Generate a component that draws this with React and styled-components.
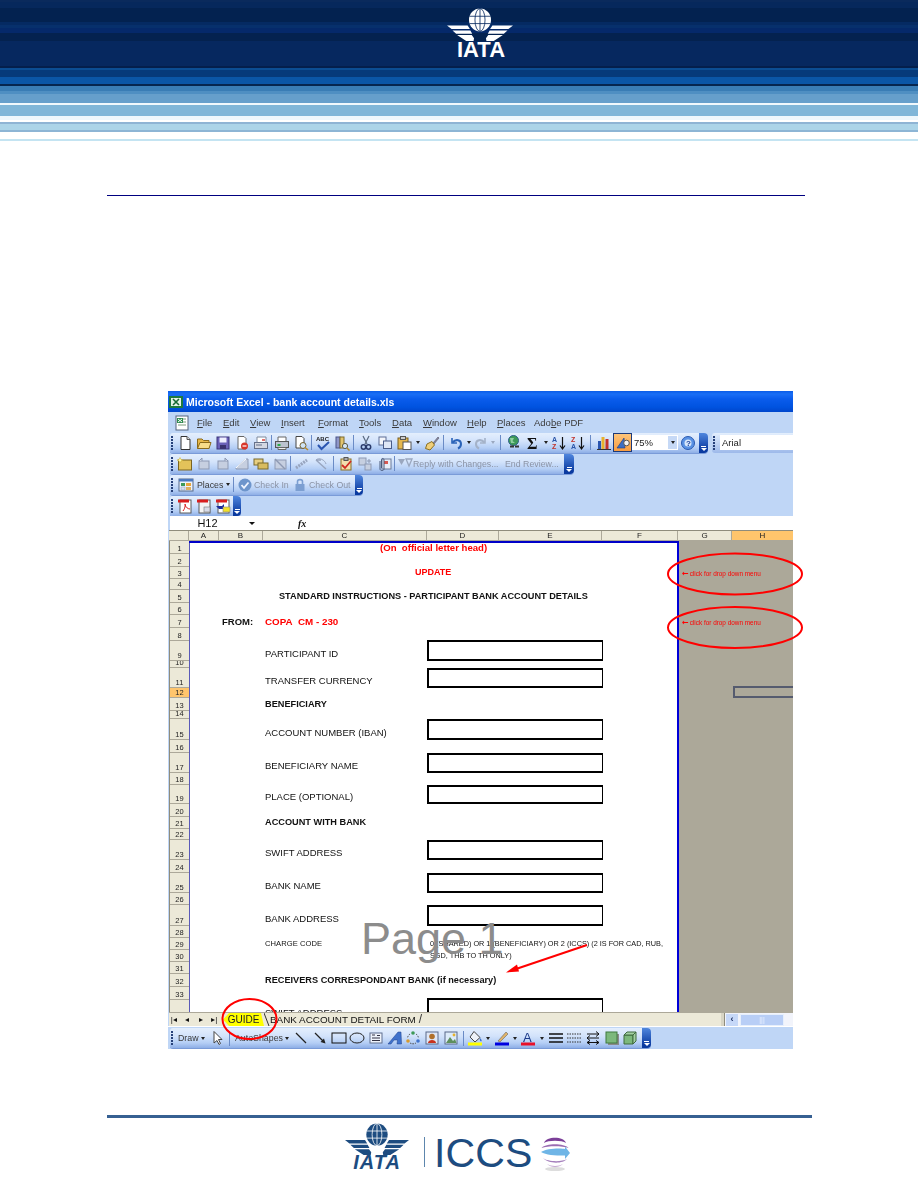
import React from 'react';
import styled, { createGlobalStyle } from 'styled-components';

const Global = createGlobalStyle`
  html, body { margin: 0; padding: 0; background: #fff; }
  body { font-family: "Liberation Sans", Arial, sans-serif; }
`;

const Page = styled.div`
  width: 918px; height: 1188px; overflow: hidden; position: relative;
  background: #fff; display: flex; flex-direction: column;
`;

/* ---------- page header ---------- */
const HeaderBand = styled.header`
  height: 141px; flex: none; display: flex; justify-content: center; padding-top: 8px; box-sizing: border-box;
  padding-left: 41px;
  background: linear-gradient(to bottom,
    #0a2a5c 0 2px, #06285c 2px 8px, #032250 8px 22px, #052a62 22px 25px, #07306c 25px 28px,
    #05296a 28px 33px, #04224f 33px 41px, #06285f 41px 66px, #041f4c 66px 68px, #0b4d92 68px 70px,
    #063a7a 70px 77px, #0b56a6 77px 84px, #06264f 84px 86px, #3a7db5 86px 91px, #4f8fc2 91px 94px,
    #669fcb 94px 103px, #f0f8fc 103px 105px, #80b6d8 105px 116px, #eef7fc 116px 120px, #fff 120px 122px,
    #8fb4d4 122px 123.5px, #acd4e8 123.5px 130px, #8db5d5 130px 131.5px, #fff 131.5px 139px, #c4e4f2 139px 141px);
`;
const LogoStack = styled.div`
  display: flex; flex-direction: column; align-items: center; width: ${p => p.$w}px; flex: none; color: ${p => p.$color};
`;
const LogoWord = styled.span`
  font-weight: 700; font-style: ${p => (p.$italic ? 'italic' : 'normal')};
  font-size: ${p => p.$size}px; line-height: ${p => p.$line}px; color: inherit;
  margin-top: ${p => p.$top}px; margin-left: ${p => p.$left}px; letter-spacing: ${p => p.$ls}px;
`;
const TopRule = styled.div`
  flex: none; height: 1px; width: 698px; margin: 54px 0 0 107px; background: #000080;
`;

/* ---------- excel frame ---------- */
const Frame = styled.section`
  position: relative; flex: none; width: 625px; height: 658px; margin: 195px 0 0 168px;
`;
const Shot = styled.div`
  width: 625px; height: 658px; overflow: hidden; display: flex; flex-direction: column;
  background: #bfd6f6; filter: blur(.4px);
`;
const TitleBar = styled.div`
  height: 21px; flex: none; display: flex; align-items: center; gap: 2px; padding-left: 0; box-sizing: border-box;
  background: linear-gradient(to bottom, #0a5ce8 0, #1a6ef5 3px, #0a5cec 8px, #0053e0 16px, #0046cc 21px);
  color: #fff; font-size: 10.5px; font-weight: 700;
`;
const MenuBar = styled.nav`
  height: 21px; flex: none; display: flex; align-items: center; padding-left: 2px; box-sizing: border-box;
  background: #bfd6f6; font-size: 9.5px; color: #3a3a3a;
`;
const MenuIcon = styled.span`width: 27px; flex: none; display: flex; padding-left: 4px; box-sizing: border-box;`;
const MenuItem = styled.span`width: ${p => p.$w}px; flex: none; white-space: nowrap;`;
const ToolRow = styled.div`
  height: ${p => p.$h || 21}px; flex: none; display: flex; align-items: flex-start; padding-left: 2px; background: #bfd6f6;
`;
const Toolbar = styled.div`
  height: 19.5px; flex: none; display: flex; align-items: center; border-radius: 3px 4px 4px 3px;
  background: linear-gradient(to bottom, #e4effd 0, #d3e3fb 40%, #b4cef5 75%, #8eaee6 100%);
  box-shadow: 0 1px 0 #7a9bd8; color: #8a94a8; font-size: 8.8px;
  width: ${p => p.$w}px;
`;
const GripBox = styled.span`
  flex: none; width: 5px; height: 14px; margin-left: 1px; margin-right: -1px;
  background: radial-gradient(circle at 1px 1px, #27417a 1px, transparent 1.2px) 0 0 / 2px 3px repeat-y;
`;
const Cell19 = styled.span`
  flex: none; width: ${p => p.$w || 19}px; height: 19px; display: flex; align-items: center; justify-content: center;
`;
const ActiveCell = styled(Cell19)`
  height: 19px; background: linear-gradient(#fdc77e, #f79a3e); box-shadow: inset 0 0 0 1px #1c3a7a;
`;
const Sep = styled.span`
  flex: none; width: ${p => p.$w}px; height: 15px; display: flex; justify-content: center;
  &::before { content: ""; width: 1px; background: #6a8bc6; }
`;
const Caret = styled.span`
  flex: none; width: ${p => p.$w}px; display: flex; justify-content: center; align-items: center;
  &::before {
    content: ""; border-left: 2.5px solid transparent; border-right: 2.5px solid transparent;
    border-top: 3px solid ${p => (p.$off ? '#9aa8c0' : '#222')};
  }
`;
const Chevron = styled.span`
  flex: none; margin-left: auto; width: ${p => p.$w || 9}px; height: 19.5px; border-radius: 0 4px 4px 0;
  background: linear-gradient(#4f86de, #0a3aa0 85%); display: flex; flex-direction: column; align-items: center;
  justify-content: flex-end; padding-bottom: 2px; box-sizing: border-box; gap: 1px;
  &::before { content: ""; width: 5px; height: 1px; background: #fff; }
  &::after { content: ""; border-left: 3px solid transparent; border-right: 3px solid transparent; border-top: 3px solid #fff; }
`;
const ToolText = styled.span`
  flex: none; white-space: nowrap; width: ${p => p.$w}px; color: ${p => (p.$on ? '#3a3a3a' : '#8b93a5')};
`;
const Combo = styled.span`
  flex: none; width: 46px; height: 15px; background: #fff; display: flex; align-items: center; justify-content: space-between;
  color: #222; font-size: 9.5px; padding-left: 2px; box-sizing: border-box;
`;
const ComboDrop = styled.span`
  width: 9px; height: 13px; margin-right: 1px; background: #c6d9f6; display: flex; align-items: center; justify-content: center;
  &::before { content: ""; border-left: 2.5px solid transparent; border-right: 2.5px solid transparent; border-top: 3px solid #222; }
`;
const FontField = styled.div`
  flex: none; margin-left: 4px; width: 90px; height: 19.5px; display: flex; align-items: center; gap: 3px;
  background: linear-gradient(#e4effd, #9db9ea); border-radius: 3px 0 0 3px;
`;
const FontInput = styled.span`
  flex: 1; height: 15px; background: #fff; font-size: 9.5px; color: #222; padding-left: 2px; line-height: 15px;
`;
const FormulaBar = styled.div`
  height: 14px; flex: none; display: flex; align-items: center; background: #fff; margin-left: 2px;
`;
const NameBox = styled.span`
  width: 75px; flex: none; text-align: center; font-size: 11px; line-height: 14px; color: #111;
`;
const NameDrop = styled.span`
  width: 14px; flex: none; display: flex; justify-content: center;
  &::before { content: ""; border-left: 3px solid transparent; border-right: 3px solid transparent; border-top: 3px solid #111; }
`;
const Fx = styled.span`
  margin-left: 39px; font-family: "Liberation Serif", serif; font-style: italic; font-weight: 700; font-size: 10px; color: #111;
`;

/* ---------- sheet ---------- */
const ColHeads = styled.div`
  height: 11px; flex: none; display: flex; background: #ece9d8; margin-left: 1px;
  border-top: 1px solid #8f8c7c; box-sizing: border-box;
`;
const ColHead = styled.span`
  flex: none; width: ${p => p.$w}px; box-sizing: border-box; text-align: center; font-size: 8px; line-height: 9px;
  color: #222; border-right: 1px solid #aca899; border-bottom: 1px solid #aca899;
  background: ${p => (p.$on ? '#ffc56c' : 'transparent')};
`;
const Sheet = styled.div`
  flex: none; height: 471px; overflow: hidden; display: flex; margin-left: 1px; background: #ece9d8;
`;
const RowHeads = styled.div`flex: none; width: 20px; display: flex; flex-direction: column; border-left: 1px solid #8f8c7c; box-sizing: border-box;`;
const RowHead = styled.span`
  flex: none; height: ${p => p.$h}px; box-sizing: border-box; overflow: hidden;
  display: flex; align-items: flex-end; justify-content: center; font-size: 7.5px; line-height: 9px; color: #222;
  border-bottom: 1px solid #aca899; background: ${p => (p.$on ? '#ffc56c' : '#ece9d8')};
`;
const PrintArea = styled.div`
  flex: none; width: 490px; display: grid; background: #fff; align-content: start;
  grid-template-columns: 30px 44px 164px 176px 76px;
  grid-template-rows: ${p => p.$rows};
  box-shadow: inset 0 2px 0 #0000c8, inset -2px 0 0 #0000d8, inset 1px 0 0 #5a5ab8;
`;
const Text = styled.span`
  grid-row: ${p => p.$row}; grid-column: ${p => p.$col} / span ${p => p.$span || 1};
  align-self: end; white-space: nowrap; line-height: 11px; padding-bottom: ${p => p.$pb ?? 1}px;
  margin-left: ${p => p.$ml ?? 2}px; font-size: ${p => p.$size || 9.5}px; font-weight: ${p => (p.$bold ? 700 : 400)};
  letter-spacing: ${p => p.$ls || 0}px; color: ${p => (p.$red ? '#ff0000' : '#111')};
`;
const InputBox = styled.span`
  grid-row: ${p => p.$row}; grid-column: 4; box-sizing: border-box; margin-top: ${p => p.$mt || 0}px;
  border: 2px solid #000; border-right-width: 1.5px; background: #fff;
`;
const GreyPane = styled.div`
  flex: 1; background: #aca899; display: grid; align-content: start;
  grid-template-columns: 54px 60px; grid-template-rows: ${p => p.$rows};
`;
const Note = styled.span`
  grid-row: ${p => p.$row}; grid-column: 1 / span 2; align-self: end; margin-left: 3px; white-space: nowrap;
  color: #f00; font-size: 6.4px; line-height: 9px; padding-bottom: 1px;
`;
const NoteArrow = styled.b`font-size: 8px; font-family: "DejaVu Sans", sans-serif; margin-right: 1px;`;
const Selection = styled.span`
  grid-row: 12; grid-column: 2; margin-top: -2px; border: 2px solid #555b6e; border-right: 0; box-sizing: border-box;
`;

/* ---------- tabs & draw bar ---------- */
const TabBar = styled.div`
  flex: none; height: 14px; display: flex; align-items: center; background: #ece9d8; margin-left: 1px;
  border-top: 1px solid #aca899; box-sizing: border-box; overflow: hidden;
`;
const NavArrows = styled.span`flex: none; width: 54px; display: flex; margin-left: -2px; margin-right: 2px;`;
const NavBtn = styled.span`flex: none; width: 13.5px; font-size: 8px; text-align: center; color: #111; line-height: 12px;`;
const GuideTab = styled.span`
  flex: none; width: 41px; height: 13px; text-align: center; font-size: 10px; line-height: 13px; color: #222;
  background: #ffff00; clip-path: polygon(0 50%, 6px 0, calc(100% - 3px) 0, 100% 100%, 6px 100%);
`;
const TabEdge = styled.svg`flex: none; width: 6px; height: 13px;`;
const PlainTab = styled.span`
  flex: none; font-size: 9.9px; line-height: 13px; color: #111; white-space: nowrap;
`;
const TabSlash = styled.span`flex: none; font-size: 12px; line-height: 13px; color: #333; margin-left: 3px;`;
const ScrollBar = styled.div`
  margin-left: auto; flex: none; width: 72px; height: 13px; display: flex; align-items: center; background: #f2f4fb;
`;
const ScrollGrip = styled.span`width: 3px; height: 13px; background: #d8d5c5; border-right: 1px solid #8f8c7c; flex: none; margin-right: 1px;`;
const ScrollBtn = styled.span`
  width: 12px; height: 12px; flex: none; background: #c6d8f8; color: #16295c; font-size: 9px; font-weight: 700; line-height: 11px; text-align: center;
  margin-right: 2px;
`;
const ScrollThumb = styled.span`
  width: 44px; height: 12px; flex: none; border: 1px solid #e6effc; box-sizing: border-box; background: #b8cef6;
  color: #eef4ff; font-size: 7px; line-height: 9px; text-align: center;
`;
const DrawGap = styled.div`height: 1px; flex: none; background: #fff;`;
const DrawRow = styled.div`
  height: 22px; flex: none; display: flex; align-items: center; padding-left: 2px; background: #bfd6f6;
`;

/* ---------- annotation overlay ---------- */
const Annotations = styled.svg`
  position: absolute; left: 0; top: 0; width: 640px; height: 658px; pointer-events: none; overflow: visible;
`;
const Watermark = styled.span`
  position: absolute; left: 193px; top: 522px; font-size: 45px; line-height: 52px; color: #8c8c8c; white-space: nowrap;
`;

/* ---------- footer ---------- */
const BottomRule = styled.div`
  flex: none; height: 3px; width: 705px; margin: 66px 0 0 107px; background: #366092;
`;
const FooterLogos = styled.footer`
  flex: none; display: flex; align-items: flex-start; margin: 5px 0 0 343px;
`;
const Divider = styled.span`flex: none; width: 1px; height: 30px; margin: 14px 9px 0 13px; background: #5d86ad;`;
const Iccs = styled.span`
  flex: none; font-size: 41px; line-height: 40px; margin-top: 10px; color: #1d4c80; letter-spacing: .1px;
`;
const Sphere = styled.span`flex: none; margin: 11px 0 0 8px; display: flex;`;

/* ---------- drawings ---------- */
const Emblem = ({ w, h, color, bg }) => (
  <svg width={w} height={h} viewBox="0 0 72 36" fill={color}>
    <ellipse cx="36" cy="13" rx="12" ry="12.5" />
    <g fill="none" stroke={bg} strokeWidth=".9">
      <ellipse cx="36" cy="13" rx="5.5" ry="12.5" />
      <path d="M36 .5V25.5M24.5 9H47.5M24.5 17H47.5" />
    </g>
    <path d="M0 19H22.5L25 23H5ZM6 24.5H25.5L27.5 28H10ZM11 29.5H27L29.5 33 29 36H21Z" />
    <path d="M72 19H49.5L47 23H67ZM66 24.5H46.5L44.5 28H62ZM61 29.5H45L42.5 33 43 36H51Z" />
  </svg>
);

const Globe3D = () => (
  <svg width="30" height="38" viewBox="0 0 30 38">
    <ellipse cx="15" cy="35" rx="10" ry="2" fill="#ddd" />
    <path d="M4 9C6 2 24 2 26 9C22 6 8 6 4 9Z" fill="#7b3f98" />
    <path d="M1.5 14C6 9 24 9 28.5 14C22 11.5 8 11.5 1.5 14Z" fill="#9a6db2" />
    <path d="M1 18C6 14 22 14 25 15V12.5L30 19 25 25V21.5C14 21.5 6 21 1 18Z" fill="#6fb5e6" />
    <path d="M3 24C8 28 22 28 27 25 23 30 8 30 3 24Z" fill="#a47fbc" />
    <path d="M7 30C11 32.5 19 32.5 23 30 19 34 11 34 7 30Z" fill="#c4a9d2" />
  </svg>
);

const S = ({ children }) => <svg width="16" height="16" viewBox="0 0 16 16">{children}</svg>;
const grey = { fill: '#c6cfe0', stroke: '#8d99b3' };
const icons = {
  xl: <><rect x="1" y="2" width="14" height="12" fill="#1f7a3e" /><rect x="3" y="4" width="10" height="8" fill="#e7f3e7" /><path d="M5 5L11 11M11 5L5 11" stroke="#1a6a34" strokeWidth="1.6" /></>,
  doc: <><rect x="2" y="1" width="12" height="14" fill="#fff" stroke="#56657e" /><path d="M4 4H12M4 7H12M4 10H12" stroke="#7c9c7c" /><rect x="3" y="3" width="6" height="5" fill="#2e8b4e" /><path d="M4 4L8 7M8 4L4 7" stroke="#fff" /></>,
  new: <><path d="M4 1.5H10L13 4.5V14.5H4Z" fill="#fff" stroke="#333" /><path d="M10 1.5V4.5H13" fill="#ddd" stroke="#555" /></>,
  open: <><path d="M1.5 4H6L7.5 5.5H13V13.5H1.5Z" fill="#e8b84a" stroke="#8a6a1c" /><path d="M1.5 13.5L4 7.5H15L13 13.5Z" fill="#f7dc8a" stroke="#8a6a1c" /></>,
  save: <><rect x="2" y="2" width="12" height="12" fill="#6a60b8" stroke="#3a3478" /><rect x="4.5" y="2.5" width="7" height="5" fill="#eef" /><rect x="5" y="10" width="6" height="4" fill="#39316f" /></>,
  perm: <><path d="M4 1.5H10L12 3.5V14H4Z" fill="#fff" stroke="#666" /><circle cx="10.5" cy="11" r="3.5" fill="#d8362a" /><rect x="8.5" y="10.4" width="4" height="1.2" fill="#fff" /></>,
  mail: <><path d="M4 2H13V8H4Z" fill="#fff" stroke="#7f8a9c" /><rect x="1.5" y="7.5" width="13" height="6" fill="#d4d8e2" stroke="#66718a" /><rect x="9" y="4" width="3" height="2" fill="#e2716c" /><path d="M3 10H9" stroke="#66718a" /></>,
  print: <><path d="M4 2H12V7H4Z" fill="#fff" stroke="#666" /><rect x="1.5" y="6.5" width="13" height="6" fill="#bbc2cf" stroke="#555" /><rect x="3.5" y="9" width="3" height="2" fill="#2aa84a" /><path d="M4 12.5H12V14.5H4Z" fill="#eee" stroke="#666" /></>,
  preview: <><path d="M3 1.5H9L11 3.5V13H3Z" fill="#fff" stroke="#444" /><circle cx="10" cy="10.5" r="3" fill="#cfe3f5" stroke="#77602a" /><path d="M12 12.5L15 15" stroke="#b88a2a" strokeWidth="1.6" /></>,
  spell: <><text x="1" y="6" fontSize="6" fontWeight="700" fill="#222" fontFamily="Liberation Sans">ABC</text><path d="M3 10L6.5 14L14 7" fill="none" stroke="#2a55b0" strokeWidth="2" /></>,
  research: <><rect x="2" y="2" width="4" height="11" fill="#8e96c8" stroke="#4a5488" /><rect x="6" y="2" width="4" height="11" fill="#e2c46e" stroke="#7d6a2c" /><circle cx="11" cy="11" r="2.6" fill="#d5e6f4" stroke="#5a5a44" /><path d="M13 13L15.5 15.5" stroke="#b08a2a" strokeWidth="1.5" /></>,
  cut: <><path d="M5 1L9 9M11 1L7 9" stroke="#5a6a80" strokeWidth="1.2" /><circle cx="5.5" cy="12" r="2.2" fill="none" stroke="#2a3a6a" strokeWidth="1.5" /><circle cx="10.5" cy="12" r="2.2" fill="none" stroke="#2a3a6a" strokeWidth="1.5" /></>,
  copy: <><rect x="2" y="2" width="7" height="8" fill="#f4f6fb" stroke="#5e6f96" /><rect x="6.5" y="6" width="8" height="7.5" fill="#dfe7f6" stroke="#4a5c88" /></>,
  paste: <><rect x="2" y="3" width="10" height="11" fill="#e6b84e" stroke="#7b5f1e" /><rect x="4.5" y="1.5" width="5" height="3" fill="#ccc" stroke="#555" /><rect x="7" y="7" width="8" height="7.5" fill="#fff" stroke="#555" /></>,
  brush: <><path d="M9 8L14 2L15 3L10 9Z" fill="#8a8aa0" stroke="#55556a" strokeWidth=".6" /><path d="M3 9L8 6.5L10.5 10L6 15L1.5 13.5Z" fill="#f0cf7a" stroke="#8a6f22" /></>,
  undo: <><path d="M4 3V8H9" fill="none" stroke="#2a63b8" strokeWidth="1.6" /><path d="M4.5 7.5C8 3.5 13 5 13 9C13 11 12 12.5 10 13.5" fill="none" stroke="#2a63b8" strokeWidth="2" /></>,
  redo: <><path d="M12 3V8H7" fill="none" stroke="#a4b2c8" strokeWidth="1.6" /><path d="M11.5 7.5C8 3.5 3 5 3 9C3 11 4 12.5 6 13.5" fill="none" stroke="#a4b2c8" strokeWidth="2" /></>,
  link: <><circle cx="7.5" cy="5.5" r="5" fill="#3e9a58" stroke="#2d5f8a" /><path d="M4 3H8L6.5 6 9 8H5Z" fill="#8fcfa0" /><path d="M4 11.5H8M9 11.5H13" stroke="#333" strokeWidth="2.2" /></>,
  sigma: <text x="2" y="14" fontSize="16" fontWeight="700" fontFamily="Liberation Serif" fill="#111">Σ</text>,
  az: <><text x="1" y="7" fontSize="7" fontWeight="700" fill="#2a55a8" fontFamily="Liberation Sans">A</text><text x="1" y="14" fontSize="7" fontWeight="700" fill="#c2322a" fontFamily="Liberation Sans">Z</text><path d="M11.5 2V13M9 10.5L11.5 14L14 10.5" fill="none" stroke="#111" strokeWidth="1.2" /></>,
  za: <><text x="1" y="7" fontSize="7" fontWeight="700" fill="#c2322a" fontFamily="Liberation Sans">Z</text><text x="1" y="14" fontSize="7" fontWeight="700" fill="#2a55a8" fontFamily="Liberation Sans">A</text><path d="M11.5 2V13M9 10.5L11.5 14L14 10.5" fill="none" stroke="#111" strokeWidth="1.2" /></>,
  chart: <><rect x="2" y="6" width="3" height="8" fill="#2a55b0" /><rect x="5.5" y="2" width="3" height="12" fill="#e8b22c" /><rect x="9.5" y="4" width="3" height="10" fill="#c2322a" /><path d="M1 14.5H15" stroke="#333" /></>,
  drawing: <><path d="M2 13L9 3L10 13Z" fill="#3a6ec4" stroke="#1e3a80" strokeWidth=".6" /><circle cx="11.5" cy="8" r="2.8" fill="#f4f4f4" stroke="#555" /></>,
  help: <><circle cx="8" cy="8" r="6.5" fill="#5a92e4" stroke="#2a5ab0" /><circle cx="8" cy="8" r="3.5" fill="#d8e8fb" /><text x="6" y="11" fontSize="8" fontWeight="700" fill="#1a3f98" fontFamily="Liberation Sans">?</text></>,
  noteNew: <><rect x="1.5" y="4" width="13" height="10" fill="#e3c25a" stroke="#7a6420" /><path d="M3 1.5L4 3.5 6 4 4 5 3 7 2 5 0 4 2 3.5Z" fill="#fff7a8" stroke="#c8a828" strokeWidth=".5" /></>,
  g1: <><rect x="3" y="5" width="10" height="8" {...grey} /><path d="M3 5L6 2V5" {...grey} /></>,
  g2: <><rect x="3" y="5" width="10" height="8" {...grey} /><path d="M13 5L10 2V5" {...grey} /></>,
  g3: <><path d="M2 12L12 3H14V13H2Z" {...grey} /><path d="M2 12L12 3" stroke="#fff" /></>,
  notes: <><rect x="1" y="3" width="9" height="6" fill="#e8cf80" stroke="#7b6a2a" /><rect x="5" y="7" width="10" height="6" fill="#d8bc60" stroke="#7b6a2a" /></>,
  gx: <><rect x="3" y="4" width="11" height="9" {...grey} /><path d="M3 3L13 13" stroke="#8d99b3" strokeWidth="1.4" /></>,
  gdash: <><path d="M2 12L13 4" stroke="#98a5bf" strokeWidth="3" strokeDasharray="2 1" /></>,
  gundo: <><path d="M3 4L13 13M3 4H8" stroke="#98a5bf" strokeWidth="1.4" fill="none" /><path d="M3 4C6 1 12 4 13 8" fill="none" stroke="#98a5bf" /></>,
  track: <><rect x="3" y="3" width="10" height="11" fill="#f2dfae" stroke="#8a6f22" /><rect x="6" y="1.5" width="4" height="3" fill="#aaa" stroke="#555" /><path d="M4 9L7 12L13 5" fill="none" stroke="#d02a22" strokeWidth="1.8" /></>,
  gcomp: <><rect x="2" y="2" width="7" height="7" {...grey} /><rect x="8" y="8" width="6" height="6" {...grey} /><path d="M10 5H14M12 3V7" stroke="#8d99b3" /></>,
  clip: <><rect x="6" y="3" width="9" height="10" fill="#e8eef8" stroke="#6a7a9a" /><rect x="8" y="5" width="4" height="3" fill="#d85a52" /><path d="M4 5V13C4 15 8 15 8 13V4C8 2 5.5 2 5.5 4V12" fill="none" stroke="#4a5a7a" /></>,
  flags: <><path d="M1 3H8L4.5 9Z" fill="#9aa7bf" /><path d="M9 3H15L12 10Z" fill="none" stroke="#9aa7bf" strokeWidth="1.3" /></>,
  places: <><rect x="1" y="2" width="14" height="12" fill="#eef3fb" stroke="#566a8a" /><rect x="1" y="2" width="14" height="2.5" fill="#4d7ac0" /><rect x="3" y="6" width="4" height="3" fill="#3e9a58" /><rect x="8" y="6" width="5" height="3" fill="#e8a63c" /><rect x="3" y="10" width="4" height="3" fill="#d8e2f2" stroke="#8898b8" strokeWidth=".5" /><rect x="8" y="10" width="5" height="3" fill="#e0b060" /></>,
  checkIn: <><circle cx="8" cy="8" r="6.5" fill="#6d95cc" /><path d="M4.5 8L7 10.8L11.5 5.5" fill="none" stroke="#eef4ff" strokeWidth="1.8" /></>,
  lock: <><rect x="3.5" y="7" width="9" height="7" fill="#7c9fd2" /><path d="M5.5 7V4.5C5.5 2 10.5 2 10.5 4.5V7" fill="none" stroke="#7c9fd2" strokeWidth="1.6" /></>,
  pdf1: <><rect x="3" y="2" width="11" height="13" fill="#fff" stroke="#5a5a5a" /><rect x="1" y="1.5" width="11" height="3" fill="#d81e1e" /><path d="M6 13C9 9 8 6 8 6C8 9 11 11 13 11" fill="none" stroke="#d81e1e" /></>,
  pdf2: <><rect x="3" y="2" width="11" height="13" fill="#f4f4f4" stroke="#5a5a5a" /><rect x="1" y="1.5" width="11" height="3" fill="#d81e1e" /><rect x="8" y="9" width="6" height="5" fill="#d8dce8" stroke="#777" strokeWidth=".6" /></>,
  pdf3: <><rect x="3" y="2" width="11" height="13" fill="#fff" stroke="#5a5a5a" /><rect x="1" y="1.5" width="11" height="3" fill="#d81e1e" /><path d="M1 8H7L9 6V11H4Z" fill="#1a2a9a" /><rect x="8" y="9" width="7" height="5" fill="#f2e22a" stroke="#888" strokeWidth=".6" /></>,
  cursor: <path d="M5 1.5V13L8 10.5L10 14.5L11.5 13.5L9.5 9.5H13Z" fill="#fff" stroke="#444" />,
  line: <path d="M3 3L13 13" stroke="#222" strokeWidth="1.2" />,
  arrow: <><path d="M3 3L12 12" stroke="#222" strokeWidth="1.2" /><path d="M13.5 13.5L8.5 12L12 8.5Z" fill="#222" /></>,
  rect: <rect x="1" y="3" width="14" height="10" fill="none" stroke="#111" />,
  oval: <ellipse cx="8" cy="8" rx="7" ry="5" fill="none" stroke="#222" />,
  textbox: <><rect x="2" y="3" width="12" height="10" fill="#eef3fb" stroke="#5f6f8f" /><path d="M4 5H7M9 5.5H12M4 8H12M4 10.5H12" stroke="#334" /></>,
  wordart: <path d="M1 14L11 2H14L14.5 14H10L10.5 10H7L4 14Z" fill="#3f72cc" stroke="#1e3f8a" strokeWidth=".5" />,
  diagram: <><circle cx="8" cy="3" r="1.8" fill="#3e9a58" /><circle cx="3" cy="11" r="1.8" fill="#d89a2c" /><circle cx="13" cy="11" r="1.8" fill="#3f72cc" /><path d="M5 4A6 6 0 0 0 2.5 8M11 4A6 6 0 0 1 13.5 8M5 13A6 6 0 0 0 11 13" fill="none" stroke="#444" strokeDasharray="1.5 1" /></>,
  clipart: <><rect x="2" y="2" width="12" height="12" fill="#dfe7f6" stroke="#5a6a8a" /><circle cx="8" cy="6.5" r="2.8" fill="#b0702a" /><path d="M4 13C4 9 12 9 12 13Z" fill="#c8321e" /></>,
  picture: <><rect x="2" y="2" width="12" height="12" fill="#dcebfa" stroke="#5a6a8a" /><path d="M3 13L7 7L10 11L12 9L13.5 13Z" fill="#5d8f5d" /><circle cx="11" cy="5" r="1.4" fill="#e8b22c" /></>,
  fill: <><path d="M7 1.5L13 7.5L8 12L3 7Z" fill="#eef2f8" stroke="#444" /><path d="M13 8C15 10 15 11 14 11.5C13 11 12.5 10 13 8Z" fill="#3f72cc" /><rect x="1" y="12.5" width="14" height="3" fill="#ffff00" /></>,
  pen: <><path d="M4 11L12 2L14 4L6 12Z" fill="#e0b36a" stroke="#666" strokeWidth=".6" /><rect x="1" y="12.5" width="14" height="3" fill="#0000e0" /></>,
  fontA: <><text x="3" y="11.5" fontSize="13" fill="#1c3a8a" fontFamily="Liberation Sans">A</text><rect x="1" y="12.5" width="14" height="3" fill="#e8102a" /></>,
  lines: <path d="M1 4H15M1 8H15M1 12H15" stroke="#111" strokeWidth="1.6" />,
  dash: <path d="M1 4H15M1 8H15M1 12H15" stroke="#333" strokeDasharray="1.5 1" />,
  arrows: <><path d="M2 4H14M11 1.5L14 4L11 6.5" fill="none" stroke="#111" /><path d="M14 8H2M5 5.5L2 8L5 10.5" fill="none" stroke="#111" /><path d="M2 12.5H14M5 10.5L2 12.5L5 14.5M11 10.5L14 12.5L11 14.5" fill="none" stroke="#111" /></>,
  shadow: <><rect x="4" y="4" width="11" height="11" fill="#8a8a8a" /><rect x="2" y="2" width="11" height="11" fill="#7cb87c" stroke="#3e7a3e" /></>,
  cube: <><path d="M2 5H11V14H2Z" fill="#7cb87c" stroke="#3e6a3e" /><path d="M2 5L5 2H14L11 5ZM11 5L14 2V11L11 14Z" fill="#a4d0a4" stroke="#3e6a3e" /></>,
};
const Icon = ({ n }) => <S>{icons[n]}</S>;
const Tool = ({ n, w }) => <Cell19 $w={w}><Icon n={n} /></Cell19>;

const rowH = [13,13,12,11,13,12,13,13,20,7,20,10,13,8,21,13,20,12,19,13,12,11,20,13,20,12,21,12,12,12,12,13,13,20];
const rowsTpl = rowH.map(h => `${h}px`).join(' ');
const cols = [['', 20], ['A', 30], ['B', 44], ['C', 164], ['D', 72], ['E', 103], ['F', 76], ['G', 54], ['H', 62]];
const menus = [['F', 'ile', 26], ['E', 'dit', 27], ['V', 'iew', 31], ['I', 'nsert', 37], ['F', 'ormat', 41], ['T', 'ools', 33], ['D', 'ata', 31], ['W', 'indow', 44], ['H', 'elp', 30], ['P', 'laces', 37], ['Adob', 'e PDF', 60]];
const labels = [
  [9, 'PARTICIPANT ID'], [11, 'TRANSFER CURRENCY'], [15, 'ACCOUNT NUMBER (IBAN)'], [17, 'BENEFICIARY NAME'],
  [19, 'PLACE (OPTIONAL)'], [23, 'SWIFT ADDRESS'], [25, 'BANK NAME'], [27, 'BANK ADDRESS'], [34, 'SWIFT ADDRESS'],
];
const heads = [[13, 'BENEFICIARY'], [21, 'ACCOUNT WITH BANK'], [32, 'RECEIVERS CORRESPONDANT BANK (if necessary)']];
const boxes = [[9, -1], [11, 0], [15, 0], [17, 0], [19, 0], [23, 0], [25, 0], [27, 0], [34, -2]];

export default function App() {
  return (
    <Page>
      <Global />
      <HeaderBand>
        <LogoStack $w={72} $color="#fff">
          <Emblem w={72} h={33} color="#fff" bg="#06285f" />
          <LogoWord $size={22} $line={16} $top={1} $left={3} $ls={0}>IATA</LogoWord>
        </LogoStack>
      </HeaderBand>
      <TopRule />
      <Frame>
        <Shot>
          <TitleBar><Icon n="xl" /><span>Microsoft Excel - bank account details.xls</span></TitleBar>
          <MenuBar>
            <MenuIcon><Icon n="doc" /></MenuIcon>
            {menus.map(([a, b, w], i) => (
              <MenuItem key={i} $w={w}>{i === 10 ? <>Ado<u>b</u>e PDF</> : <><u>{a}</u>{b}</>}</MenuItem>
            ))}
          </MenuBar>
          <ToolRow>
            <Toolbar $w={538}>
              <GripBox />
              {['new', 'open', 'save', 'perm', 'mail'].map(n => <Tool key={n} n={n} />)}
              <Sep $w={2} />
              <Tool n="print" /><Tool n="preview" />
              <Sep $w={3} />
              <Tool n="spell" /><Tool n="research" />
              <Sep $w={5} />
              <Tool n="cut" /><Tool n="copy" /><Tool n="paste" />
              <Caret $w={9} />
              <Tool n="brush" />
              <Sep $w={5} />
              <Tool n="undo" /><Caret $w={7} />
              <Tool n="redo" w={17} /><Caret $w={8} $off />
              <Sep $w={7} />
              <Tool n="link" /><Tool n="sigma" /><Caret $w={7} />
              <Tool n="az" /><Tool n="za" />
              <Sep $w={7} />
              <Tool n="chart" />
              <ActiveCell><Icon n="drawing" /></ActiveCell>
              <Combo>75%<ComboDrop /></Combo>
              <Tool n="help" w={20} />
              <Chevron />
            </Toolbar>
            <FontField><GripBox /><FontInput>Arial</FontInput></FontField>
          </ToolRow>
          <ToolRow>
            <Toolbar $w={404}>
              <GripBox />
              {['noteNew', 'g1', 'g2', 'g3', 'notes', 'gx'].map(n => <Tool key={n} n={n} />)}
              <Sep $w={3} />
              <Tool n="gdash" /><Tool n="gundo" />
              <Sep $w={6} />
              <Tool n="track" /><Tool n="gcomp" /><Tool n="clip" />
              <Sep $w={3} />
              <Tool n="flags" w={17} />
              <ToolText $w={92}>Reply with Changes...</ToolText>
              <ToolText $w={56}>End Review...</ToolText>
              <Chevron $w={10} />
            </Toolbar>
          </ToolRow>
          <ToolRow>
            <Toolbar $w={193}>
              <GripBox />
              <Tool n="places" w={22} />
              <ToolText $w={28} $on>Places</ToolText>
              <Caret $w={6} />
              <Sep $w={5} />
              <Tool n="checkIn" w={18} />
              <ToolText $w={37}>Check In</ToolText>
              <Tool n="lock" w={18} />
              <ToolText $w={40}>Check Out</ToolText>
              <Chevron $w={8} />
            </Toolbar>
          </ToolRow>
          <ToolRow $h={20}>
            <Toolbar $w={71}>
              <GripBox />
              <Tool n="pdf1" /><Tool n="pdf2" /><Tool n="pdf3" />
              <Chevron $w={8} />
            </Toolbar>
          </ToolRow>
          <FormulaBar>
            <NameBox>H12</NameBox><NameDrop /><Fx>fx</Fx>
          </FormulaBar>
          <ColHeads>
            {cols.map(([c, w]) => <ColHead key={c || 'corner'} $w={w} $on={c === 'H'}>{c}</ColHead>)}
          </ColHeads>
          <Sheet>
            <RowHeads>
              {rowH.map((h, i) => <RowHead key={i} $h={h} $on={i === 11}>{i + 1}</RowHead>)}
            </RowHeads>
            <PrintArea $rows={rowsTpl}>
              <Text $row={1} $col={3} $span={2} $red $bold $size={9.6} $ml={117}>(On&nbsp; official letter head)</Text>
              <Text $row={3} $col={3} $span={2} $red $bold $size={9} $ml={152}>UPDATE</Text>
              <Text $row={5} $col={3} $span={3} $bold $size={9.18} $ml={16}>STANDARD INSTRUCTIONS - PARTICIPANT BANK ACCOUNT DETAILS</Text>
              <Text $row={7} $col={2} $bold $size={9.5} $ml={3}>FROM:</Text>
              <Text $row={7} $col={3} $red $bold $size={9.8} $ml={2}>COPA&nbsp; CM - 230</Text>
              {boxes.map(([r, mt]) => <InputBox key={r} $row={r} $mt={mt} />)}
              {labels.map(([r, t]) => <Text key={r} $row={r} $col={3} $pb={2}>{t}</Text>)}
              {heads.map(([r, t]) => <Text key={r} $row={r} $col={3} $bold $size={9.2}>{t}</Text>)}
              <Text $row={29} $col={3} $size={7.6} $ls={.05}>CHARGE CODE</Text>
              <Text $row={29} $col={4} $span={2} $size={7.3} $ml={3}>0 (SHARED) OR 1 (BENEFICIARY) OR 2 (ICCS) (2 IS FOR CAD, RUB,</Text>
              <Text $row={30} $col={4} $span={2} $size={7.3} $ml={3}>SGD, THB TO TH ONLY)</Text>
            </PrintArea>
            <GreyPane $rows={rowsTpl}>
              <Note $row={3}><NoteArrow>←</NoteArrow>click for drop down menu</Note>
              <Note $row={7}><NoteArrow>←</NoteArrow>click for drop down menu</Note>
              <Selection />
            </GreyPane>
          </Sheet>
          <TabBar>
            <NavArrows>
              <NavBtn>|◂</NavBtn><NavBtn>◂</NavBtn><NavBtn>▸</NavBtn><NavBtn>▸|</NavBtn>
            </NavArrows>
            <GuideTab>GUIDE</GuideTab>
            <TabEdge viewBox="0 0 6 13"><path d="M0 0L5 13" stroke="#333" fill="none" /></TabEdge>
            <PlainTab>BANK ACCOUNT DETAIL FORM</PlainTab>
            <TabSlash>/</TabSlash>
            <ScrollBar>
              <ScrollGrip />
              <ScrollBtn>‹</ScrollBtn>
              <ScrollThumb>|||</ScrollThumb>
            </ScrollBar>
          </TabBar>
          <DrawGap />
          <DrawRow>
            <Toolbar $w={481}>
              <GripBox />
              <Cell19 $w={3} />
              <ToolText $w={19} $on>Draw</ToolText>
              <Caret $w={11} />
              <Tool n="cursor" w={18} />
              <Sep $w={6} />
              <Cell19 $w={3} />
              <ToolText $w={47} $on>AutoShapes</ToolText>
              <Caret $w={10} />
              {['line', 'arrow', 'rect', 'oval', 'textbox', 'wordart', 'diagram', 'clipart', 'picture'].map(n => <Tool key={n} n={n} w={18.7} />)}
              <Sep $w={6} />
              <Tool n="fill" w={18} /><Caret $w={8} />
              <Tool n="pen" w={19} /><Caret $w={8} />
              <Tool n="fontA" w={18} /><Caret $w={9} />
              {['lines', 'dash', 'arrows', 'shadow', 'cube'].map(n => <Tool key={n} n={n} w={18.7} />)}
              <Chevron $w={9} />
            </Toolbar>
          </DrawRow>
        </Shot>
        <Watermark>Page 1</Watermark>
        <Annotations viewBox="0 0 640 658">
          <g fill="none" stroke="#f00" strokeWidth="2">
            <ellipse cx="567" cy="183" rx="67" ry="20.5" />
            <ellipse cx="567" cy="236.5" rx="67" ry="20.5" />
            <ellipse cx="81.5" cy="628" rx="27" ry="20" />
            <path d="M419 554L345 579" />
          </g>
          <path d="M338 581.5L349 573.5L351 580.5Z" fill="#f00" />
        </Annotations>
      </Frame>
      <BottomRule />
      <FooterLogos>
        <LogoStack $w={68} $color="#1d4c80">
          <Emblem w={68} h={32} color="#1d4c80" bg="#fff" />
          <LogoWord $italic $size={20} $line={15} $top={0} $left={0} $ls={1}>IATA</LogoWord>
        </LogoStack>
        <Divider />
        <Iccs>ICCS</Iccs>
        <Sphere><Globe3D /></Sphere>
      </FooterLogos>
    </Page>
  );
}
